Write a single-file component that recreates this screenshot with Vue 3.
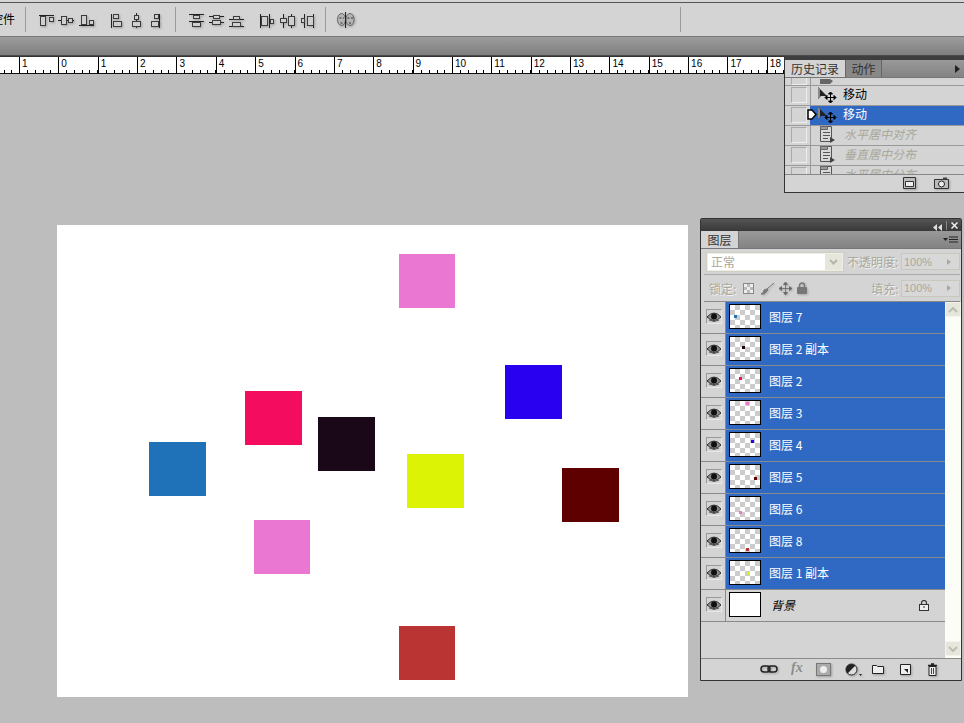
<script setup>
const squares = [
  { x: 399, y: 254, w: 56, h: 54, c: '#ea78d2' },
  { x: 505, y: 365, w: 57, h: 54, c: '#2a00f0' },
  { x: 245, y: 391, w: 57, h: 54, c: '#f40c5f' },
  { x: 318, y: 417, w: 57, h: 54, c: '#1a0718' },
  { x: 149, y: 442, w: 57, h: 54, c: '#2072b8' },
  { x: 407, y: 454, w: 57, h: 54, c: '#dcf306' },
  { x: 562, y: 468, w: 57, h: 54, c: '#5e0000' },
  { x: 254, y: 520, w: 56, h: 54, c: '#ea78d2' },
  { x: 399, y: 626, w: 56, h: 54, c: '#bb3434' },
]

// squares[] index shown in each layer thumbnail
const layers = [
  { name: '图层 7', sq: 4 },
  { name: '图层 2 副本', sq: 3 },
  { name: '图层 2', sq: 2 },
  { name: '图层 3', sq: 0 },
  { name: '图层 4', sq: 1 },
  { name: '图层 5', sq: 6 },
  { name: '图层 6', sq: 7 },
  { name: '图层 8', sq: 8 },
  { name: '图层 1 副本', sq: 5 },
]

// first cell is off-screen, cells past 18 sit under the history panel
const rulerNums = ['', '1', '0', '1', '2', '3', '4', '5', '6', '7', '8', '9', '10', '11', '12', '13', '14', '15', '16', '17', '18', '', '', '', '']

const history = ['水平居中对齐', '垂直居中分布', '水平居中分布']

// l = lines, r = rects, all in 16x16 box
const groups = [
  [
    { l: [[1, 3.5, 16, 3.5]], r: [[2.5, 4.5, 5, 9], [11.5, 5.5, 4, 4]] },
    { l: [[0, 8.5, 16, 8.5]], r: [[3.5, 4.5, 5, 8], [10.5, 6.5, 4, 4]] },
    { l: [[1, 13.5, 16, 13.5]], r: [[3.5, 3.5, 5, 9], [11.5, 8.5, 4, 4]] },
  ],
  [
    { l: [[1.5, 2, 1.5, 16]], r: [[3.5, 2.5, 5, 4], [3.5, 9.5, 8, 5]] },
    { l: [[6.5, 1, 6.5, 16]], r: [[4.5, 3.5, 4, 4], [2.5, 9.5, 8, 5]] },
    { l: [[9.5, 2, 9.5, 16]], r: [[4.5, 2.5, 4, 4], [1.5, 9.5, 7, 5]] },
  ],
  [
    { l: [[1, 2.5, 16, 2.5], [1, 9.5, 16, 9.5]], r: [[5.5, 3.5, 6, 3], [4.5, 10.5, 8, 4]] },
    { l: [[1, 4.5, 16, 4.5], [1, 10.5, 16, 10.5]], r: [[5.5, 3.5, 6, 3], [4.5, 8.5, 8, 4]] },
    { l: [[1, 7.5, 16, 7.5], [1, 14.5, 16, 14.5]], r: [[5.5, 4.5, 6, 3], [4.5, 10.5, 8, 4]] },
  ],
  [
    { l: [[2.5, 2, 2.5, 16], [11.5, 2, 11.5, 16]], r: [[3.5, 4.5, 6, 9], [12.5, 7.5, 3, 4]] },
    { l: [[5.5, 2, 5.5, 16], [13.5, 2, 13.5, 16]], r: [[2.5, 6.5, 6, 4], [10.5, 4.5, 6, 9]] },
    { l: [[6.5, 2, 6.5, 16], [15.5, 2, 15.5, 16]], r: [[3.5, 6.5, 3, 4], [9.5, 4.5, 6, 9]] },
  ],
]

const thumbStyle = (i) => {
  const s = squares[i]
  const k = 30 / 631
  return {
    left: (s.x - 57) * k + 'px',
    top: (s.y - 225) * k + 'px',
    background: s.c,
  }
}
</script>

<template>
  <div class="ps">
    <div class="top-strip"></div>

    <div class="options">
      <span class="cut-label">控件</span>
      <i class="sep first"></i>
      <template v-for="(group, g) in groups" :key="g">
        <div class="icon-group" :class="'g' + g">
          <svg v-for="(ic, n) in group" :key="n" class="align" width="17" height="16" viewBox="0 0 17 16">
            <line v-for="(li, a) in ic.l" :key="a" :x1="li[0]" :y1="li[1]" :x2="li[2]" :y2="li[3]" stroke="#222" />
            <rect v-for="(re, b) in ic.r" :key="b" :x="re[0]" :y="re[1]" :width="re[2]" :height="re[3]" fill="#cfcfcf" stroke="#3c3c3c" />
          </svg>
        </div>
        <i v-if="g === 1 || g === 3" class="sep"></i>
      </template>
      <svg class="faces" width="18" height="16" viewBox="0 0 18 16">
        <ellipse cx="4.500" cy="7.500" rx="4" ry="6" fill="#b5b5b5" stroke="#666" />
        <ellipse cx="13" cy="7.500" rx="4" ry="6" fill="#b5b5b5" stroke="#666" />
        <path d="M2.500 6h2M10.500 6h2M6 6h1M14 6h2M3.500 11h2M12 11h2" stroke="#333" />
        <line x1="8.500" y1="0" x2="8.500" y2="16" stroke="#222" />
      </svg>
      <i class="sep far"></i>
    </div>

    <div class="band"></div>

    <div class="ruler">
      <div v-for="(n, i) in rulerNums" :key="i" class="rcell"><span>{{ n }}</span></div>
    </div>

    <div class="workspace">
      <div class="doc">
        <div
          v-for="(s, i) in squares"
          :key="i"
          class="sq"
          :style="{ left: s.x - 57 + 'px', top: s.y - 225 + 'px', width: s.w + 'px', height: s.h + 'px', background: s.c }"
        ></div>
      </div>
    </div>

    <!-- history panel -->
    <section class="panel history">
      <div class="tabs">
        <span class="tab on">历史记录</span>
        <span class="tab off">动作</span>
        <span class="tab-rest"><b class="play"></b></span>
      </div>
      <div class="h-list">
        <div class="h-row clip">
          <span class="h-check"></span>
          <span class="h-main">
            <svg class="cursor" width="20" height="6" viewBox="0 0 20 6"><path d="M3 0h10l3 2-3 3H3z" fill="#666" /></svg>
          </span>
        </div>
        <div class="h-row">
          <span class="h-check"></span>
          <span class="h-main">
            <svg class="cursor" width="20" height="17" viewBox="0 0 20 17">
              <path d="M1 1v12l3-3h6z" fill="#222" />
              <path d="M1 1v12l2-2V3z" fill="#888" />
              <path d="M13.500 7v9M9 11.500h9M13.500 6l-2 2h4zM13.500 17l-2-2h4zM8 11.500l2-2v4zM19 11.500l-2-2v4z" fill="#000" stroke="#000" />
            </svg>
            <span class="h-name">移动</span>
          </span>
        </div>
        <div class="h-row sel">
          <span class="h-check"></span>
          <span class="h-main">
            <svg class="snap" width="10" height="11" viewBox="0 0 10 11"><path d="M1 1h4l4 4.500L5 10H1z" fill="#fff" stroke="#000" stroke-width="1.500" /></svg>
            <svg class="cursor" width="20" height="17" viewBox="0 0 20 17">
              <path d="M1 1v12l3-3h6z" fill="#222" />
              <path d="M1 1v12l2-2V3z" fill="#888" />
              <path d="M13.500 7v9M9 11.500h9M13.500 6l-2 2h4zM13.500 17l-2-2h4zM8 11.500l2-2v4zM19 11.500l-2-2v4z" fill="#000" stroke="#000" />
            </svg>
            <span class="h-name">移动</span>
          </span>
        </div>
        <div v-for="(h, i) in history" :key="i" class="h-row">
          <span class="h-check"></span>
          <span class="h-main">
            <svg class="docicon" width="16" height="17" viewBox="0 0 16 17">
              <path d="M1.500.5h11v15h-11z" fill="#d8d8d8" stroke="#555" />
              <path d="M1.500.5h7v3h-7z" fill="#999" stroke="#666" />
              <path d="M4 6.500h7M4 9.500h7M4 12.500h5" stroke="#555" />
              <path d="M11 11l5 3-5 3z" fill="#444" />
            </svg>
            <span class="h-name ghost">{{ h }}</span>
          </span>
        </div>
      </div>
      <div class="h-foot">
        <svg width="13" height="12" viewBox="0 0 13 12">
          <path d="M.5.500h12v11H.500z" fill="#bbb" stroke="#333" />
          <path d="M2.500 4.500h8v5h-8z" fill="#eee" stroke="#333" />
        </svg>
        <svg width="15" height="12" viewBox="0 0 15 12">
          <path d="M.5 2.500h14v9H.500z" fill="#bbb" stroke="#333" />
          <circle cx="7.500" cy="7" r="3" fill="#eee" stroke="#222" />
          <path d="M9 .5h4v2H9z" fill="#444" />
        </svg>
      </div>
    </section>

    <!-- layers panel -->
    <section class="panel layers">
      <div class="titlebar">
        <span class="collapse">
          <svg width="9" height="7" viewBox="0 0 9 7"><path d="M4 0v7L0 3.500zM9 0v7L5 3.500z" fill="#ddd" /></svg>
        </span>
        <i class="tb-sep"></i>
        <svg width="7" height="7" viewBox="0 0 7 7"><path d="M.5.500l6 6M6.500.500l-6 6" stroke="#eee" stroke-width="1.500" /></svg>
      </div>
      <div class="tabs l-tabs">
        <span class="tab on l-tab">图层</span>
        <span class="tab-rest">
          <svg class="menu" width="15" height="8" viewBox="0 0 15 8">
            <path d="M0 2h5L2.500 5z" fill="#222" />
            <path d="M6 1h9M6 3.500h9M6 6h9" stroke="#222" />
          </svg>
        </span>
      </div>

      <div class="blend-row">
        <div class="select">
          <span class="select-val">正常</span>
          <span class="select-btn">
            <svg width="9" height="6" viewBox="0 0 9 6"><path d="M1 1l3.500 3.500L8 1" fill="none" stroke="#b5b5a8" stroke-width="2" /></svg>
          </span>
        </div>
        <span class="dim opacity-label">不透明度:</span>
        <div class="num"><span>100%</span><b></b></div>
      </div>

      <div class="lock-row">
        <span class="dim">锁定:</span>
        <span class="lock-box"></span>
        <svg class="lk brush" width="14" height="13" viewBox="0 0 14 13"><path d="M13 1L6 7M7 8L3 12H0q3-1 3-4 2-1 3-1z" fill="#777" stroke="#777" /></svg>
        <svg class="lk arrows" width="13" height="13" viewBox="0 0 13 13"><path d="M6.500 1v11M1 6.500h11M6.500 0L4.500 2.500h4zM6.500 13l-2-2.500h4zM0 6.500l2.500-2v4zM13 6.500l-2.500-2v4z" fill="#666" stroke="#666" stroke-width=".8" /></svg>
        <svg class="lk padlock" width="10" height="12" viewBox="0 0 10 12"><path d="M2.500 5V3.500a2.500 2.500 0 015 0V5" fill="none" stroke="#777" stroke-width="1.500" /><rect y="5" width="10" height="7" rx="1" fill="#777" /></svg>
        <span class="dim fill-label">填充:</span>
        <div class="num"><span>100%</span><b></b></div>
      </div>

      <div class="l-body">
        <div class="l-list">
          <div v-for="(l, i) in layers" :key="i" class="l-row sel-row">
            <span class="eye-cell">
              <span class="eye-box">
                <svg width="14" height="10" viewBox="0 0 14 10">
                  <path d="M0 5q7-8 14 0-7 7-14 0z" fill="#8c8c8c" stroke="#333" />
                  <circle cx="7" cy="4.500" r="3" fill="#111" />
                  <path d="M2 8q5 3 10 0" fill="none" stroke="#555" />
                </svg>
              </span>
            </span>
            <span class="l-main">
              <span class="thumb checker"><i class="mini" :style="thumbStyle(l.sq)"></i></span>
              <span class="l-name">{{ l.name }}</span>
            </span>
          </div>
          <div class="l-row">
            <span class="eye-cell">
              <span class="eye-box">
                <svg width="14" height="10" viewBox="0 0 14 10">
                  <path d="M0 5q7-8 14 0-7 7-14 0z" fill="#8c8c8c" stroke="#333" />
                  <circle cx="7" cy="4.500" r="3" fill="#111" />
                  <path d="M2 8q5 3 10 0" fill="none" stroke="#555" />
                </svg>
              </span>
            </span>
            <span class="l-main">
              <span class="thumb"></span>
              <span class="l-name bg-name">背景</span>
              <svg class="bg-lock" width="10" height="11" viewBox="0 0 10 11">
                <path d="M2.500 5V3a2.500 2.500 0 015 0v2" fill="none" stroke="#333" stroke-width="1.200" />
                <rect x=".5" y="4.500" width="9" height="6" fill="#eee" stroke="#333" />
                <path d="M4 7h2" stroke="#333" />
              </svg>
            </span>
          </div>
        </div>
        <div class="scroll">
          <span class="s-btn">
            <svg width="10" height="6" viewBox="0 0 10 6"><path d="M1 5l4-4 4 4" fill="none" stroke="#bdbdb0" stroke-width="2" /></svg>
          </span>
          <span class="s-btn">
            <svg width="10" height="6" viewBox="0 0 10 6"><path d="M1 1l4 4 4-4" fill="none" stroke="#bdbdb0" stroke-width="2" /></svg>
          </span>
        </div>
      </div>

      <div class="l-foot">
        <svg class="f-link" width="18" height="8" viewBox="0 0 18 8">
          <rect x="1" y="1" width="9" height="6" rx="3" fill="none" stroke="#222" stroke-width="1.500" />
          <rect x="8" y="1" width="9" height="6" rx="3" fill="none" stroke="#222" stroke-width="1.500" />
        </svg>
        <span class="f-fx">fx</span>
        <svg class="f-mask" width="15" height="13" viewBox="0 0 15 13">
          <rect x=".5" y=".5" width="14" height="12" fill="#aaa" stroke="#777" />
          <circle cx="7.500" cy="6.500" r="3.500" fill="#eee" />
        </svg>
        <svg class="f-adj" width="17" height="13" viewBox="0 0 17 13">
          <circle cx="6.500" cy="6.500" r="5.500" fill="#ddd" stroke="#222" />
          <path d="M2.600 10.400A5.500 5.500 0 0110.400 2.600z" fill="#222" />
          <path d="M14 11h3l-1.500 2z" fill="#222" />
        </svg>
        <svg class="f-folder" width="12" height="10" viewBox="0 0 12 10"><path d="M.5 1.500h4l1 1h6v7H.500z" fill="#eee" stroke="#222" /></svg>
        <svg class="f-new" width="11" height="11" viewBox="0 0 11 11"><path d="M.5.500h10v10H.500z" fill="#eee" stroke="#222" /><path d="M4 5h4v4z" fill="#222" /></svg>
        <svg class="f-trash" width="11" height="13" viewBox="0 0 11 13">
          <path d="M1 2.500h9M4 1h3" stroke="#222" stroke-width="1.500" />
          <path d="M2 3.500h7v9H2z" fill="#eee" stroke="#222" />
          <path d="M4.500 5v6M6.500 5v6" stroke="#444" />
        </svg>
        <span class="grip"></span>
      </div>
    </section>
  </div>
</template>

<style>
html,
body {
  margin: 0;
  background: #bdbdbd;
}
</style>

<style scoped>
.ps {
  position: relative;
  width: 964px;
  height: 723px;
  overflow: hidden;
  background: #bdbdbd;
  font-family: "Noto Sans CJK SC", "Liberation Sans", sans-serif;
  font-size: 12px;
  color: #000;
}

.top-strip {
  height: 2px;
  background: #d6d6d6;
  border-bottom: 1px solid #555;
}

/* options bar */
.options {
  display: flex;
  align-items: center;
  height: 33px;
  background: #d4d4d4;
  border-bottom: 1px solid #777;
}

.cut-label {
  width: 15px;
  overflow: hidden;
  white-space: nowrap;
  direction: rtl;
  font-size: 12px;
  line-height: 14px;
  margin-bottom: 2px;
}

.sep {
  display: block;
  width: 1px;
  height: 25px;
  background: #9a9a9a;
  margin-left: 10px;
  margin-right: 12px;
}

.sep.far {
  margin-left: 325px;
}

.icon-group {
  display: flex;
  gap: 3px;
}

.icon-group.g0 {
  margin-right: 15px;
}

.icon-group.g1 {
  margin-right: -2px;
}

.icon-group.g2 {
  margin-right: 13px;
}

.align {
  filter: drop-shadow(1px 1px 1px rgba(0, 0, 0, 0.25));
}

.faces {
  margin-left: -1px;
  filter: drop-shadow(1px 1px 1px rgba(0, 0, 0, 0.25));
}

.band {
  height: 18px;
  background: linear-gradient(#9c9c9c, #7f7f7f);
  border-bottom: 1px solid #4a4a4a;
}

/* ruler */
.ruler {
  display: flex;
  box-sizing: border-box;
  height: 18px;
  margin-left: -20.37px;
  background: #fff;
  border-top: 1px solid #333;
  border-bottom: 1px solid #111;
}

.rcell {
  flex: 0 0 39.37px;
  box-sizing: border-box;
  height: 16px;
  border-left: 1px solid #000;
  font-family: "Liberation Sans", sans-serif;
  font-size: 10px;
  line-height: 14px;
  padding-left: 2px;
  background-image: repeating-linear-gradient(90deg, transparent 0 6.87px, #000 6.87px 7.874px);
  background-size: 100% 3px;
  background-position: 0 100%;
  background-repeat: no-repeat;
}

/* canvas */
.workspace {
  padding: 151px 0 0 57px;
}

.doc {
  position: relative;
  width: 631px;
  height: 472px;
  background: #fff;
}

.sq {
  position: absolute;
}

/* panels */
.panel {
  position: absolute;
  box-sizing: border-box;
  background: #d4d4d4;
  border: 1px solid #333;
}

.history {
  left: 784px;
  top: 56px;
  width: 182px;
  height: 137px;
  border-top: 4px solid #3e3e3e;
}

.tabs {
  display: flex;
  box-sizing: border-box;
  height: 18px;
  border-bottom: 1px solid #777;
}

.tab {
  display: flex;
  align-items: center;
  justify-content: center;
  font-size: 12px;
}

.tab.on {
  width: 60px;
  background: #d4d4d4;
  color: #333;
}

.tab.off {
  width: 37px;
  background: #888;
  color: #333;
  border-left: 1px solid #666;
  border-right: 1px solid #666;
  box-sizing: border-box;
}

.tab-rest {
  flex: 1;
  display: flex;
  align-items: center;
  justify-content: flex-end;
  background: linear-gradient(#999, #838383);
}

.play {
  display: block;
  margin-right: 5px;
  border-left: 5px solid #222;
  border-top: 4px solid transparent;
  border-bottom: 4px solid transparent;
}

.h-list {
  height: 97px;
  overflow: hidden;
  border-bottom: 1px solid #888;
  box-sizing: border-box;
}

.h-row {
  display: flex;
  height: 20px;
  box-sizing: border-box;
  border-bottom: 1px solid #999;
}

.h-row.clip {
  height: 8px;
  align-items: flex-end;
}

.h-check {
  flex: 0 0 16px;
  box-sizing: border-box;
  height: 16px;
  margin: 1px 3px 0 6px;
  border: 1px solid #aaa;
  border-right-color: #eee;
  border-bottom-color: #eee;
}

.h-row.clip .h-check {
  height: 7px;
  margin-top: 0;
  border-top: 0;
}

.h-main {
  flex: 1;
  position: relative;
  display: flex;
  align-items: center;
  align-self: stretch;
  padding-bottom: 2px;
  box-sizing: border-box;
  border-left: 1px solid #999;
}

.h-row.clip .h-main {
  padding-bottom: 0;
}

.h-row.sel .h-main {
  background: #2f69c3;
  color: #fff;
  border-left-color: #2f69c3;
}

.cursor {
  flex: none;
  margin-left: 6px;
}

.h-name {
  margin-left: 6px;
  margin-bottom: 2px;
  font-size: 12px;
}

.h-name.ghost {
  font-style: italic;
  color: #a9a89b;
  margin-left: 9px;
  white-space: nowrap;
}

.docicon {
  flex: none;
  margin-left: 8px;
}

.snap {
  position: absolute;
  left: -4px;
  top: 3px;
}

.h-foot {
  display: flex;
  align-items: center;
  height: 16px;
  padding-left: 118px;
  gap: 18px;
}

.h-foot svg,
.l-foot svg {
  filter: drop-shadow(1px 1px 1px rgba(0, 0, 0, 0.25));
}

.layers {
  left: 700px;
  top: 218px;
  width: 262px;
  height: 463px;
  border-radius: 2px 2px 0 0;
}

.titlebar {
  display: flex;
  align-items: center;
  justify-content: flex-end;
  gap: 4px;
  height: 12px;
  padding-right: 3px;
  background: linear-gradient(#555, #383838);
}

.tb-sep {
  display: block;
  width: 1px;
  height: 9px;
  background: #888;
}

.l-tabs {
  height: 18px;
}

.tab.on.l-tab {
  flex: none;
  width: 38px;
  border-right: 1px solid #777;
  box-sizing: border-box;
}

.menu {
  margin-right: 3px;
}

.blend-row,
.lock-row {
  display: flex;
  align-items: center;
  margin: 0 1px 0 3px;
  border-bottom: 1px solid #aaa;
  box-sizing: border-box;
}

.blend-row {
  height: 26px;
  padding-left: 2px;
}

.lock-row {
  height: 27px;
  padding-left: 5px;
  border-bottom-color: #8a8a8a;
}

.select {
  display: flex;
  align-items: center;
  box-sizing: border-box;
  width: 138px;
  height: 20px;
  padding: 1px;
  background: #eeeee6;
  border: 1px solid #cfcfc4;
}

.select-val {
  flex: 1;
  height: 16px;
  background: #fff;
  color: #a9a89b;
  font-size: 12px;
  line-height: 16px;
  padding-left: 3px;
}

.select-btn {
  display: flex;
  align-items: center;
  justify-content: center;
  flex: 0 0 17px;
  height: 16px;
  background: #e6e6dc;
}

.dim {
  color: #a9a89b;
  font-size: 12px;
  white-space: nowrap;
  text-shadow: 1px 1px 0 #f2f2f2;
}

.opacity-label {
  margin-left: 3px;
}

.fill-label {
  margin-left: 64px;
}

.num {
  display: flex;
  align-items: center;
  box-sizing: border-box;
  width: 59px;
  height: 17px;
  margin-left: auto;
  border: 1px solid #c8c8bc;
  background: #d8d8d8;
  color: #a9a89b;
  font-family: "Liberation Sans", sans-serif;
  font-size: 11px;
  padding-left: 2px;
}

.num span {
  flex: 1;
}

.num b {
  display: block;
  margin-right: 8px;
  border-left: 4px solid #a9a89b;
  border-top: 3px solid transparent;
  border-bottom: 3px solid transparent;
}

.lock-box {
  box-sizing: border-box;
  width: 11px;
  height: 11px;
  margin-left: 7px;
  border: 1px solid #888;
  background: conic-gradient(#bbb 25%, #eee 0 50%, #bbb 0 75%, #eee 0) 0 0 / 6px 6px;
}

.lk {
  margin-left: 7px;
  filter: drop-shadow(1px 1px 1px rgba(0, 0, 0, 0.2));
}

.lk.arrows {
  margin-left: 4px;
}

.lk.padlock {
  margin-left: 5px;
}

.l-body {
  display: flex;
  height: 357px;
  border-bottom: 1px solid #8a8a8a;
  box-sizing: border-box;
}

.l-list {
  width: 244px;
}

.l-row {
  display: flex;
  height: 32px;
  box-sizing: border-box;
  border-bottom: 1px solid #8a8a8a;
}

.eye-cell {
  display: flex;
  align-items: center;
  justify-content: center;
  flex: 0 0 25px;
  border-right: 1px solid #8a8a8a;
  box-sizing: border-box;
  padding: 0 0 2px 1px;
}

.eye-box {
  display: flex;
  align-items: center;
  justify-content: center;
  box-sizing: border-box;
  width: 16px;
  height: 15px;
  border: 1px solid #999;
  border-right-color: #e8e8e8;
  border-bottom-color: #e8e8e8;
}

.l-main {
  flex: 1;
  position: relative;
  display: flex;
  align-items: center;
  padding-left: 3px;
  padding-bottom: 2px;
}

.sel-row .l-main {
  background: #2f69c3;
  color: #fff;
}

.thumb {
  position: relative;
  display: block;
  flex: none;
  box-sizing: border-box;
  width: 32px;
  height: 25px;
  border: 1px solid #000;
  background: #fff;
}

.checker {
  background: conic-gradient(#ccc 25%, #fff 0 50%, #ccc 0 75%, #fff 0) 0 0 / 10px 10px;
}

.mini {
  position: absolute;
  width: 3px;
  height: 3px;
}

.l-name {
  margin-left: 8px;
  font-size: 12px;
  white-space: nowrap;
}

.bg-name {
  font-style: italic;
  margin-left: 10px;
}

.bg-lock {
  position: absolute;
  left: 193px;
  top: 10px;
}

.scroll {
  display: flex;
  flex-direction: column;
  justify-content: space-between;
  width: 16px;
  background: #fdfdf7;
  padding-bottom: 2px;
  box-sizing: border-box;
}

.s-btn {
  display: flex;
  align-items: center;
  justify-content: center;
  height: 15px;
  background: #e6e6dc;
  border: 1px solid #f4f4ec;
  box-sizing: border-box;
}

.l-foot {
  position: relative;
  display: flex;
  align-items: center;
  height: 20px;
  padding-left: 59px;
}

.f-link {
  margin-right: 13px;
}

.f-fx {
  font-family: "Liberation Serif", serif;
  font-style: italic;
  font-weight: bold;
  font-size: 14px;
  color: #8c8c8c;
  margin-right: 13px;
  margin-bottom: 2px;
}

.f-mask {
  margin-right: 14px;
}

.f-adj {
  margin-right: 10px;
}

.f-folder {
  margin-right: 16px;
}

.f-new {
  margin-right: 16px;
}

.grip {
  position: absolute;
  right: 1px;
  bottom: 1px;
  width: 8px;
  height: 8px;
  background: radial-gradient(circle, #777 40%, transparent 45%) 0 0 / 2px 2px;
  clip-path: polygon(100% 0, 100% 100%, 0 100%);
}
</style>
